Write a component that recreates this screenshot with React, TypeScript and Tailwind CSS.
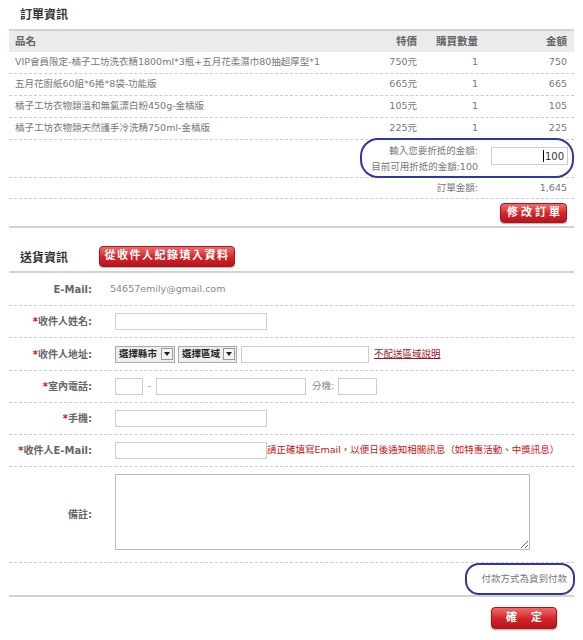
import React from "react";

const items = [
  { name: "VIP會員限定-橘子工坊洗衣精1800ml*3瓶+五月花柔濕巾80抽超厚型*1", price: "750元", qty: "1", amount: "750" },
  { name: "五月花廚紙60組*6捲*8袋-功能版", price: "665元", qty: "1", amount: "665" },
  { name: "橘子工坊衣物類溫和無氯漂白粉450g-金橘版", price: "105元", qty: "1", amount: "105" },
  { name: "橘子工坊衣物類天然護手冷洗精750ml-金橘版", price: "225元", qty: "1", amount: "225" },
];

function FakeSelect({ label, w }: { label: string; w: string }) {
  return (
    <div className={`h-[17px] ${w} border border-[#a9a9a9] bg-[#eeeeee] flex items-center justify-between pl-[3px] pr-[1px] text-[9.5px] font-bold text-[#222]`}>
      <span className="whitespace-nowrap">{label}</span>
      <span className="w-[12px] h-[12px] border border-[#9a9a9a] bg-[#f4f4f4] flex items-center justify-center shrink-0">
        <span className="w-0 h-0 border-l-[3px] border-r-[3px] border-t-[4px] border-l-transparent border-r-transparent border-t-[#222]" />
      </span>
    </div>
  );
}

function Label({ text, req }: { text: string; req?: boolean }) {
  return (
    <div className="w-[83px] shrink-0 text-right text-[10px] font-bold text-[#666] whitespace-nowrap">
      {req && <span className="text-[#cc1111]">*</span>}
      {text}
    </div>
  );
}

function Input({ w }: { w: string }) {
  return <div className={`h-[17px] ${w} border border-[#cccccc] bg-white shrink-0`} />;
}

export default function App() {
  return (
    <div className="w-[583px] h-[640px] bg-white px-[9px] font-[family-name:DejaVu_Sans,Noto_Sans_CJK_TC,sans-serif] text-[9.5px] text-[#777]">
      {/* Section 1 */}
      <div className="h-[29px] flex items-center pl-[11px] text-[12px] font-bold text-[#333]">訂單資訊</div>
      <div className="border-t-2 border-[#d2d2d2]">
        <div className="grid grid-cols-[1fr_70px_61px_89px] h-[21px] items-center bg-[#ebebeb] pl-[6px] pr-[7px] text-[10.5px] font-bold text-[#666]">
          <div>品名</div>
          <div className="text-right">特價</div>
          <div className="text-right">購買數量</div>
          <div className="text-right">金額</div>
        </div>
        {items.map((it) => (
          <div
            key={it.name}
            className="grid grid-cols-[1fr_70px_61px_89px] h-[22px] items-center border-b border-dashed border-[#cccccc] pl-[6px] pr-[7px] whitespace-nowrap"
          >
            <div>{it.name}</div>
            <div className="text-right">{it.price}</div>
            <div className="text-right">{it.qty}</div>
            <div className="text-right">{it.amount}</div>
          </div>
        ))}
        <div className="relative grid grid-cols-[1fr_89px] h-[38px] border-b border-dashed border-[#cccccc] pl-[6px] pr-[7px]">
          <div className="flex flex-col justify-center items-end leading-[16px] text-[#777]">
            <div>輸入您要折抵的金額:</div>
            <div>目前可用折抵的金額:100</div>
          </div>
          <div className="flex justify-end items-start pt-[7px]">
            <div className="h-[18px] w-[77px] -mr-[1px] border border-[#cccccc] bg-white flex items-center justify-end pr-[3px] text-[10px] text-[#333]">
              <span className="w-px h-[12px] bg-black mr-[1px]" />
              100
            </div>
          </div>
          <div className="absolute left-[351px] top-[-2px] w-[214px] h-[40px] border-[2.5px] border-[#2f37a3] rounded-[18px] pointer-events-none" />
        </div>
        <div className="grid grid-cols-[1fr_89px] h-[21px] items-center border-b border-dashed border-[#cccccc] pl-[6px] pr-[7px]">
          <div className="text-right">訂單金額:</div>
          <div className="text-right">1,645</div>
        </div>
        <div className="h-[29px] flex justify-end items-start pt-[4px] pr-[7px] border-b-2 border-[#d2d2d2]">
          <button className="h-[20px] w-[67px] rounded-[4px] border border-[#a3161b] bg-linear-to-b from-[#ee6a6d] via-[#d6262c] to-[#b8141a] text-white text-[11px] font-bold tracking-[3px] pl-[3px] shadow-[0_1px_1px_rgba(0,0,0,0.3)] flex items-center justify-center">
            修改訂單
          </button>
        </div>
      </div>

      {/* Section 2 */}
      <div className="h-[45px] flex items-start pt-[18px] pl-[11px] border-b-2 border-[#d2d2d2]">
        <div className="w-[79px] mt-[3px] text-[12px] font-bold text-[#333]">送貨資訊</div>
        <button className="h-[21px] w-[136px] rounded-[4px] border border-[#a3161b] bg-linear-to-b from-[#ee6a6d] via-[#d6262c] to-[#b8141a] text-white text-[11px] font-bold tracking-[1.5px] shadow-[0_1px_1px_rgba(0,0,0,0.3)] flex items-center justify-center">
          從收件人紀錄填入資料
        </button>
      </div>

      <div className="flex items-center h-[33px] border-b border-dashed border-[#cccccc]">
        <Label text="E-Mail:" />
        <div className="pl-[18px] text-[#888]">54657emily@gmail.com</div>
      </div>

      <div className="flex items-center h-[32px] border-b border-dashed border-[#cccccc]">
        <Label text="收件人姓名:" req />
        <div className="pl-[23px] flex items-center">
          <Input w="w-[152px]" />
        </div>
      </div>

      <div className="flex items-center h-[33px] border-b border-dashed border-[#cccccc]">
        <Label text="收件人地址:" req />
        <div className="pl-[23px] flex items-center">
          <FakeSelect label="選擇縣市" w="w-[60px]" />
          <div className="w-[3px]" />
          <FakeSelect label="選擇區域" w="w-[59px]" />
          <div className="w-[4px]" />
          <Input w="w-[128px]" />
          <a className="ml-[5px] text-[#a3151b] underline whitespace-nowrap">不配送區域說明</a>
        </div>
      </div>

      <div className="flex items-center h-[32px] border-b border-dashed border-[#cccccc]">
        <Label text="室內電話:" req />
        <div className="pl-[23px] flex items-center text-[#888]">
          <Input w="w-[28px]" />
          <span className="w-[13px] text-center">-</span>
          <Input w="w-[150px]" />
          <span className="ml-[6px] mr-[4px] whitespace-nowrap">分機:</span>
          <Input w="w-[39px]" />
        </div>
      </div>

      <div className="flex items-center h-[32px] border-b border-dashed border-[#cccccc]">
        <Label text="手機:" req />
        <div className="pl-[23px] flex items-center">
          <Input w="w-[152px]" />
        </div>
      </div>

      <div className="flex items-center h-[32px] border-b border-dashed border-[#cccccc]">
        <Label text="收件人E-Mail:" req />
        <div className="pl-[23px] flex items-center">
          <Input w="w-[152px]" />
          <span className="text-[#cc1111] whitespace-nowrap">請正確填寫Email，以便日後通知相關訊息（如特惠活動、中獎訊息）</span>
        </div>
      </div>

      <div className="flex items-center h-[96px] border-b border-dashed border-[#cccccc]">
        <Label text="備註:" />
        <div className="pl-[23px] self-start pt-[7px]">
          <textarea className="block w-[415px] h-[76px] border border-[#bbbbbb] bg-white resize" />
        </div>
      </div>

      <div className="relative flex items-center justify-end h-[34px] pr-[7px] border-b-2 border-[#d2d2d2]">
        <span>付款方式為貨到付款</span>
        <div className="absolute right-[-1px] top-0 w-[110px] h-[32px] border-[2.5px] border-[#2f37a3] rounded-[14px] pointer-events-none" />
      </div>

      <div className="flex justify-end pt-[10px] pr-[17px]">
        <button className="h-[22px] w-[66px] rounded-[4px] border border-[#a3161b] bg-linear-to-b from-[#ee6a6d] via-[#d6262c] to-[#b8141a] text-white text-[11px] font-bold shadow-[0_1px_2px_rgba(0,0,0,0.35)] flex items-center justify-center gap-[14px]">
          <span>確</span>
          <span>定</span>
        </button>
      </div>
    </div>
  );
}
